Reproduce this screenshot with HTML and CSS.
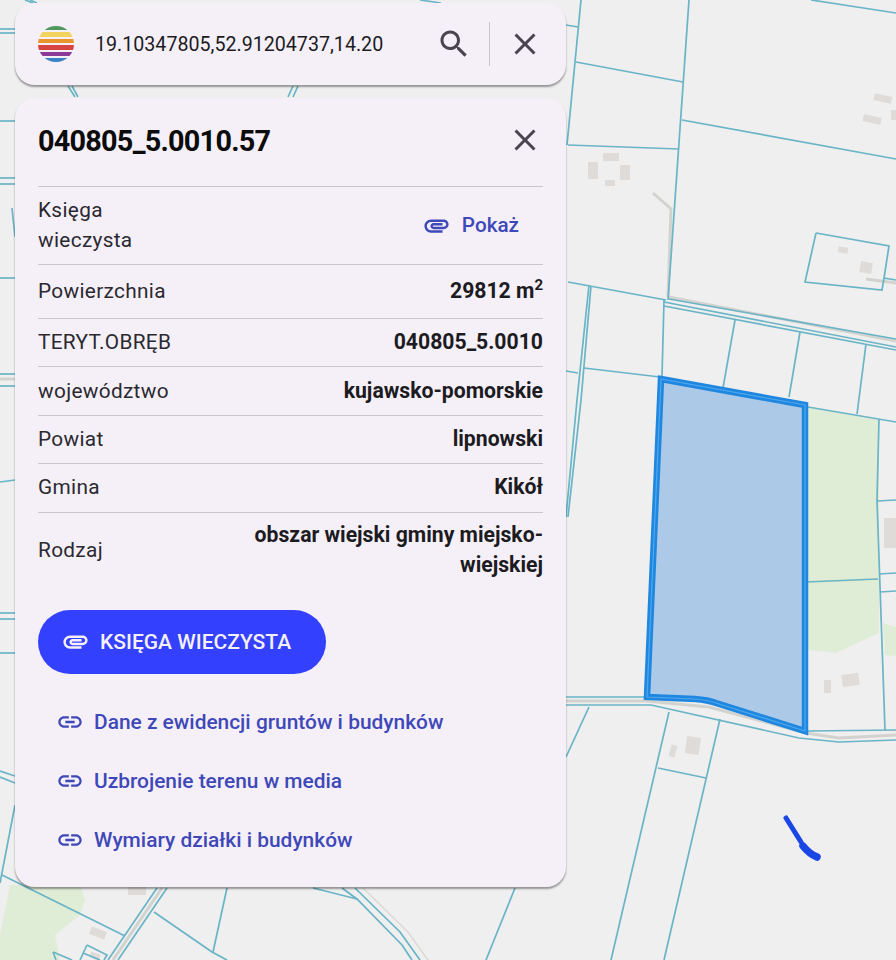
FILE: index.html
```html
<!DOCTYPE html>
<html lang="pl">
<head>
    <meta charset="UTF-8">
    <meta name="viewport" content="width=device-width, initial-scale=1.0">
    <title>Działka 040805_5.0010.57</title>
    <link rel="stylesheet" href="styles.css">
</head>
<body>

<!-- Map drawn as one canvas behind the cards -->
<svg class="map" viewBox="0 0 896 960" aria-hidden="true">
    <polygon class="green" points="808,407 879,420 879,633 836,653 808,650"/>
    <polygon class="green" points="883,623 896,627 896,656 885,655"/>
    <polygon class="green" points="10,885 80,885 85,900 80,915 55,935 60,960 0,960 0,935"/>

    <g class="building">
        <rect x="603" y="153" width="16" height="8"/>
        <rect x="588" y="162" width="10" height="17"/>
        <rect x="620" y="165" width="10" height="15"/>
        <rect x="605" y="180" width="10" height="6"/>
        <rect x="874" y="95" width="18" height="7" transform="rotate(12 883 98)"/>
        <rect x="863" y="116" width="18" height="7" transform="rotate(12 872 120)"/>
        <rect x="891" y="110" width="5" height="10"/>
        <rect x="838" y="247" width="10" height="6" transform="rotate(10 843 250)"/>
        <rect x="860" y="262" width="12" height="11" transform="rotate(10 866 268)"/>
        <rect x="884" y="518" width="12" height="30"/>
        <rect x="824" y="680" width="7" height="13"/>
        <rect x="842" y="674" width="17" height="12" transform="rotate(-8 850 680)"/>
        <rect x="686" y="737" width="14" height="17" transform="rotate(8 693 745)"/>
        <rect x="670" y="745" width="6" height="12" transform="rotate(15 673 751)"/>
        <rect x="128" y="886" width="18" height="9"/>
        <rect x="90" y="929" width="16" height="8" transform="rotate(20 98 933)"/>
        <rect x="90" y="953" width="10" height="6" transform="rotate(20 95 956)"/>
    </g>

    <g class="road">
        <polyline points="653,193 671,209 668,297"/>
        <polyline points="669,297 896,341"/>
        <polyline points="866,279 896,283"/>
        <polyline points="566,701 646,701 709,707 806,733 839,738 896,735"/>
        <polyline points="0,379 15,379"/>
        <polyline points="162,888 113,960"/>
        <polyline class="road-pale" points="363,888 408,932 428,960"/>
    </g>

    <g class="parcel">
        <line x1="581" y1="0" x2="567" y2="145"/>
        <line x1="566" y1="25" x2="578" y2="27"/>
        <line x1="576" y1="62" x2="683" y2="82"/>
        <line x1="689" y1="0" x2="668" y2="300"/>
        <line x1="682" y1="120" x2="896" y2="159"/>
        <line x1="811" y1="0" x2="896" y2="13"/>
        <line x1="568" y1="145" x2="679" y2="149"/>
        <line x1="568" y1="282" x2="666" y2="300"/>
        <polyline points="589,285 577,400 566,517"/>
        <polyline points="591,286 581,400 568,517"/>
        <line x1="669" y1="299" x2="896" y2="339"/>
        <line x1="664" y1="302" x2="896" y2="347"/>
        <line x1="664" y1="306" x2="896" y2="350"/>
        <line x1="664" y1="300" x2="662" y2="377"/>
        <line x1="735" y1="320" x2="723" y2="388"/>
        <line x1="800" y1="332" x2="789" y2="397"/>
        <line x1="866" y1="344" x2="857" y2="414"/>
        <line x1="584" y1="368" x2="660" y2="377"/>
        <line x1="566" y1="371" x2="578" y2="373"/>
        <polyline points="816,233 889,246 884,278 896,280"/>
        <polyline points="816,233 805,282 882,290 884,278"/>
        <line x1="808" y1="407" x2="896" y2="422"/>
        <polyline points="879,419 877,500 885,730"/>
        <line x1="877" y1="501" x2="896" y2="500"/>
        <line x1="806" y1="582" x2="878" y2="579"/>
        <line x1="879" y1="574" x2="896" y2="573"/>
        <line x1="880" y1="592" x2="896" y2="591"/>
        <line x1="566" y1="697" x2="644" y2="697"/>
        <polyline points="566,705 651,705 799,738 839,742 896,740"/>
        <line x1="808" y1="731" x2="896" y2="730"/>
        <line x1="589" y1="707" x2="566" y2="757"/>
        <line x1="669" y1="712" x2="611" y2="960"/>
        <line x1="720" y1="719" x2="664" y2="960"/>
        <line x1="658" y1="768" x2="706" y2="778"/>

        <line x1="0" y1="29" x2="15" y2="29"/>
        <line x1="0" y1="33" x2="15" y2="33"/>
        <line x1="0" y1="121" x2="15" y2="121"/>
        <line x1="0" y1="178" x2="15" y2="178"/>
        <line x1="0" y1="184" x2="15" y2="184"/>
        <line x1="12" y1="208" x2="15" y2="237"/>
        <line x1="0" y1="278" x2="15" y2="278"/>
        <line x1="0" y1="374" x2="15" y2="374"/>
        <line x1="0" y1="386" x2="15" y2="386"/>
        <line x1="0" y1="482" x2="15" y2="480"/>
        <line x1="0" y1="613" x2="15" y2="613"/>
        <line x1="0" y1="619" x2="15" y2="619"/>
        <line x1="0" y1="653" x2="15" y2="653"/>
        <line x1="0" y1="771" x2="15" y2="776"/>
        <line x1="0" y1="777" x2="15" y2="783"/>
        <line x1="15" y1="805" x2="0" y2="883"/>
        <line x1="2" y1="875" x2="125" y2="936"/>

        <line x1="25" y1="0" x2="33" y2="3"/>
        <line x1="30" y1="0" x2="37" y2="3"/>
        <line x1="420" y1="0" x2="441" y2="3"/>
        <line x1="68" y1="86" x2="75" y2="97"/>
        <line x1="72" y1="86" x2="78" y2="97"/>
        <line x1="293" y1="86" x2="288" y2="97"/>
        <line x1="298" y1="86" x2="293" y2="97"/>

        <line x1="157" y1="888" x2="108" y2="960"/>
        <line x1="167" y1="888" x2="118" y2="960"/>
        <polyline points="154,912 212,952 227,960"/>
        <line x1="227" y1="888" x2="213" y2="952"/>
        <polyline points="313,888 357,899"/>
        <polyline points="342,888 357,899 402,945 412,960"/>
        <polyline points="355,888 400,932 420,960"/>
        <line x1="515" y1="888" x2="486" y2="960"/>
        <polyline points="87,945 107,955 104,960"/>
        <line x1="87" y1="945" x2="80" y2="960"/>
        <polyline points="53,952 72,960"/>
        <line x1="53" y1="952" x2="56" y2="960"/>
        <line x1="83" y1="953" x2="100" y2="960"/>
    </g>

    <!-- selected plot -->
    <path class="plot" d="M661,379 L805,405 L805,731 L716,703 Q708,700 695,699 L647,697 Z"/>
    <path class="plot-line" d="M661,379 L805,405 L805,731 L716,703 Q708,700 695,699 L647,697 Z"/>
    <path class="plot-inner" d="M661,379 L805,405 L805,731 L716,703 Q708,700 695,699 L647,697 Z"/>

    <!-- pen scribble -->
    <polyline class="scribble" points="786,818 801,842"/>
    <path class="scribble-end" d="M803,846 C807,851 812,855 817,857"/>
</svg>

<main class="panels">
    <div class="card search-card">
        <svg class="logo" viewBox="0 0 36 36" aria-hidden="true">
            <defs><clipPath id="logo-circle"><circle cx="18" cy="18" r="18"/></clipPath></defs>
            <g clip-path="url(#logo-circle)">
                <rect y="0" width="36" height="4" fill="#4f9a5c"/>
                <rect y="6" width="36" height="5" fill="#f2d35e"/>
                <rect y="13" width="36" height="4" fill="#e8952c"/>
                <rect y="19" width="36" height="5" fill="#d8433f"/>
                <rect y="26" width="36" height="4" fill="#8c3a98"/>
                <rect y="32" width="36" height="4" fill="#3a82c4"/>
            </g>
        </svg>
        <span class="search-text">19.10347805,52.91204737,14.20</span>
        <svg class="icon-btn search-btn" viewBox="0 0 24 24" aria-hidden="true"><path d="M15.5 14h-.79l-.28-.27C15.41 12.59 16 11.11 16 9.5 16 5.91 13.09 3 9.5 3S3 5.91 3 9.5 5.91 16 9.5 16c1.61 0 3.09-.59 4.23-1.57l.27.28v.79l5 4.99L20.49 19l-4.99-5zm-6 0C7.01 14 5 11.99 5 9.5S7.01 5 9.5 5 14 7.01 14 9.5 11.99 14 9.5 14z"/></svg>
        <span class="search-divider"></span>
        <svg class="icon-btn" viewBox="0 0 24 24" aria-hidden="true"><path d="M19 6.41 17.59 5 12 10.59 6.41 5 5 6.41 10.59 12 5 17.59 6.41 19 12 13.41 17.59 19 19 17.59 13.41 12z"/></svg>
    </div>

    <section class="card detail-card">
        <div class="detail-head">
            <h1>040805_5.0010.57</h1>
            <svg class="icon-btn" viewBox="0 0 24 24" aria-hidden="true"><path d="M19 6.41 17.59 5 12 10.59 6.41 5 5 6.41 10.59 12 5 17.59 6.41 19 12 13.41 17.59 19 19 17.59 13.41 12z"/></svg>
        </div>

        <div class="row row-book">
            <span class="label">Księga<br>wieczysta</span>
            <a class="show-link" href="#">
                <svg class="clip" viewBox="0 0 24 24" aria-hidden="true"><path d="M2 12.5C2 9.46 4.46 7 7.5 7H18c2.21 0 4 1.79 4 4s-1.79 4-4 4H9.5C8.12 15 7 13.88 7 12.5S8.12 10 9.5 10H17v2H9.41c-.55 0-.55 1 0 1H18c1.1 0 2-.9 2-2s-.9-2-2-2H7.5C5.57 9 4 10.57 4 12.5S5.57 16 7.5 16H17v2H7.5C4.46 18 2 15.54 2 12.5z"/></svg>
                Pokaż
            </a>
        </div>
        <div class="row row-area">
            <span class="label">Powierzchnia</span>
            <span class="value">29812 m<sup>2</sup></span>
        </div>
        <div class="row">
            <span class="label">TERYT.OBRĘB</span>
            <span class="value">040805_5.0010</span>
        </div>
        <div class="row">
            <span class="label">województwo</span>
            <span class="value">kujawsko-pomorskie</span>
        </div>
        <div class="row">
            <span class="label">Powiat</span>
            <span class="value">lipnowski</span>
        </div>
        <div class="row">
            <span class="label">Gmina</span>
            <span class="value">Kikół</span>
        </div>
        <div class="row row-kind">
            <span class="label">Rodzaj</span>
            <span class="value">obszar wiejski gminy miejsko-<br>wiejskiej</span>
        </div>

        <a class="book-button" href="#">
            <svg class="clip" viewBox="0 0 24 24" aria-hidden="true"><path d="M2 12.5C2 9.46 4.46 7 7.5 7H18c2.21 0 4 1.79 4 4s-1.79 4-4 4H9.5C8.12 15 7 13.88 7 12.5S8.12 10 9.5 10H17v2H9.41c-.55 0-.55 1 0 1H18c1.1 0 2-.9 2-2s-.9-2-2-2H7.5C5.57 9 4 10.57 4 12.5S5.57 16 7.5 16H17v2H7.5C4.46 18 2 15.54 2 12.5z"/></svg>
            KSIĘGA WIECZYSTA
        </a>

        <ul class="links">
            <li><a href="#"><svg class="link-icon" viewBox="0 0 24 24" aria-hidden="true"><path d="M3.9 12c0-1.71 1.39-3.1 3.1-3.1h4V7H7c-2.76 0-5 2.24-5 5s2.24 5 5 5h4v-1.9H7c-1.71 0-3.1-1.39-3.1-3.1zM8 13h8v-2H8v2zm9-6h-4v1.9h4c1.71 0 3.1 1.39 3.1 3.1s-1.39 3.1-3.1 3.1h-4V17h4c2.76 0 5-2.24 5-5s-2.24-5-5-5z"/></svg>Dane z ewidencji gruntów i budynków</a></li>
            <li><a href="#"><svg class="link-icon" viewBox="0 0 24 24" aria-hidden="true"><path d="M3.9 12c0-1.71 1.39-3.1 3.1-3.1h4V7H7c-2.76 0-5 2.24-5 5s2.24 5 5 5h4v-1.9H7c-1.71 0-3.1-1.39-3.1-3.1zM8 13h8v-2H8v2zm9-6h-4v1.9h4c1.71 0 3.1 1.39 3.1 3.1s-1.39 3.1-3.1 3.1h-4V17h4c2.76 0 5-2.24 5-5s-2.24-5-5-5z"/></svg>Uzbrojenie terenu w media</a></li>
            <li><a href="#"><svg class="link-icon" viewBox="0 0 24 24" aria-hidden="true"><path d="M3.9 12c0-1.71 1.39-3.1 3.1-3.1h4V7H7c-2.76 0-5 2.24-5 5s2.24 5 5 5h4v-1.9H7c-1.71 0-3.1-1.39-3.1-3.1zM8 13h8v-2H8v2zm9-6h-4v1.9h4c1.71 0 3.1 1.39 3.1 3.1s-1.39 3.1-3.1 3.1h-4V17h4c2.76 0 5-2.24 5-5s-2.24-5-5-5z"/></svg>Wymiary działki i budynków</a></li>
        </ul>
    </section>
</main>

</body>
</html>
```

FILE: styles.css
```css
html, body {
    margin: 0;
    padding: 0;
}
body {
    position: relative;
    width: 896px;
    height: 960px;
    overflow: hidden;
    background-color: #efefef;
    font-family: Roboto, "Noto Sans", sans-serif;
    color: #1c1b1f;
}

/* Map canvas */
.map {
    position: absolute;
    top: 0;
    left: 0;
    width: 896px;
    height: 960px;
}
.green {
    fill: #dfedd6;
}
.building {
    fill: #dedbd9;
}
.road polyline {
    fill: none;
    stroke: #d2d2cf;
    stroke-width: 3;
}
.road .road-pale {
    stroke-width: 1.5;
    stroke: #dcdad6;
}
.parcel line, .parcel polyline {
    fill: none;
    stroke: #69b4c6;
    stroke-width: 1.7;
}
.plot {
    fill: #adc9e8;
}
.plot-line {
    fill: none;
    stroke: #1f87df;
    stroke-width: 6.5;
}
.plot-inner {
    fill: none;
    stroke: #4fa8ee;
    stroke-width: 1.2;
}
.scribble {
    fill: none;
    stroke: #1a46e6;
    stroke-width: 5;
    stroke-linecap: round;
}
.scribble-end {
    fill: none;
    stroke: #1a46e6;
    stroke-width: 7.5;
    stroke-linecap: round;
}

/* Cards */
.panels {
    position: relative;
    display: flex;
    flex-direction: column;
    gap: 13px;
    width: 551px;
    padding: 3px 0 0 15px;
}
.card {
    background-color: #f5f0f8;
    border-radius: 20px;
    box-shadow: 0 2px 2px rgba(0, 0, 0, 0.38);
}

/* Search bar */
.search-card {
    display: flex;
    align-items: center;
    height: 82px;
    padding: 0 23px;
    box-sizing: border-box;
}
.logo {
    width: 36px;
    height: 36px;
    flex: none;
    margin-right: 21px;
}
.search-text {
    flex: 1;
    font-size: 19.65px;
}
.icon-btn {
    width: 36px;
    height: 36px;
    flex: none;
    fill: #49454f;
}
.search-divider {
    width: 1px;
    height: 44px;
    margin: 0 17px;
    background-color: #c9c5cc;
}

/* Parcel details */
.detail-card {
    height: 789px;
    padding: 0 23px;
    box-sizing: border-box;
}
.detail-head {
    display: flex;
    align-items: center;
    justify-content: space-between;
    height: 84px;
    margin-bottom: 4px;
}
.detail-head h1 {
    margin: 2px 0 0;
    font-size: 28.8px;
    font-weight: 700;
    letter-spacing: -0.75px;
    color: #0c0c0c;
}
.row {
    display: flex;
    align-items: center;
    justify-content: space-between;
    height: 48.4px;
    padding-bottom: 1px;
    border-top: 1px solid #c9c5cc;
    box-sizing: border-box;
    font-size: 20.8px;
}
.row-book {
    height: 78px;
}
.row-area {
    height: 54px;
}
.row-kind {
    height: 76px;
}
.label {
    line-height: 30px;
    letter-spacing: 0.32px;
    color: #2b2930;
}
.value {
    text-align: right;
    font-size: 21.2px;
    font-weight: 700;
    line-height: 30px;
}
.value sup {
    font-size: 15px;
    line-height: 0;
}
.show-link {
    display: flex;
    align-items: center;
    gap: 11px;
    margin-right: 24px;
    font-size: 20.7px;
    font-weight: 500;
    color: #3f48b8;
    text-decoration: none;
}
.clip {
    width: 29px;
    height: 29px;
    flex: none;
    fill: currentColor;
}
.book-button {
    display: flex;
    align-items: center;
    gap: 10px;
    width: 288px;
    height: 64px;
    margin-top: 22.4px;
    padding-left: 23px;
    box-sizing: border-box;
    border-radius: 32px;
    background-color: #3341ff;
    color: #f5f0f8;
    font-size: 21px;
    font-weight: 500;
    text-decoration: none;
}
.links {
    list-style: none;
    margin: 19px 0 0;
    padding: 0;
}
.links a {
    display: flex;
    align-items: center;
    gap: 10px;
    height: 59px;
    padding-left: 18px;
    font-size: 20.9px;
    font-weight: 500;
    color: #3f48b8;
    text-decoration: none;
}
.link-icon {
    width: 28px;
    height: 28px;
    flex: none;
    fill: currentColor;
}
```
